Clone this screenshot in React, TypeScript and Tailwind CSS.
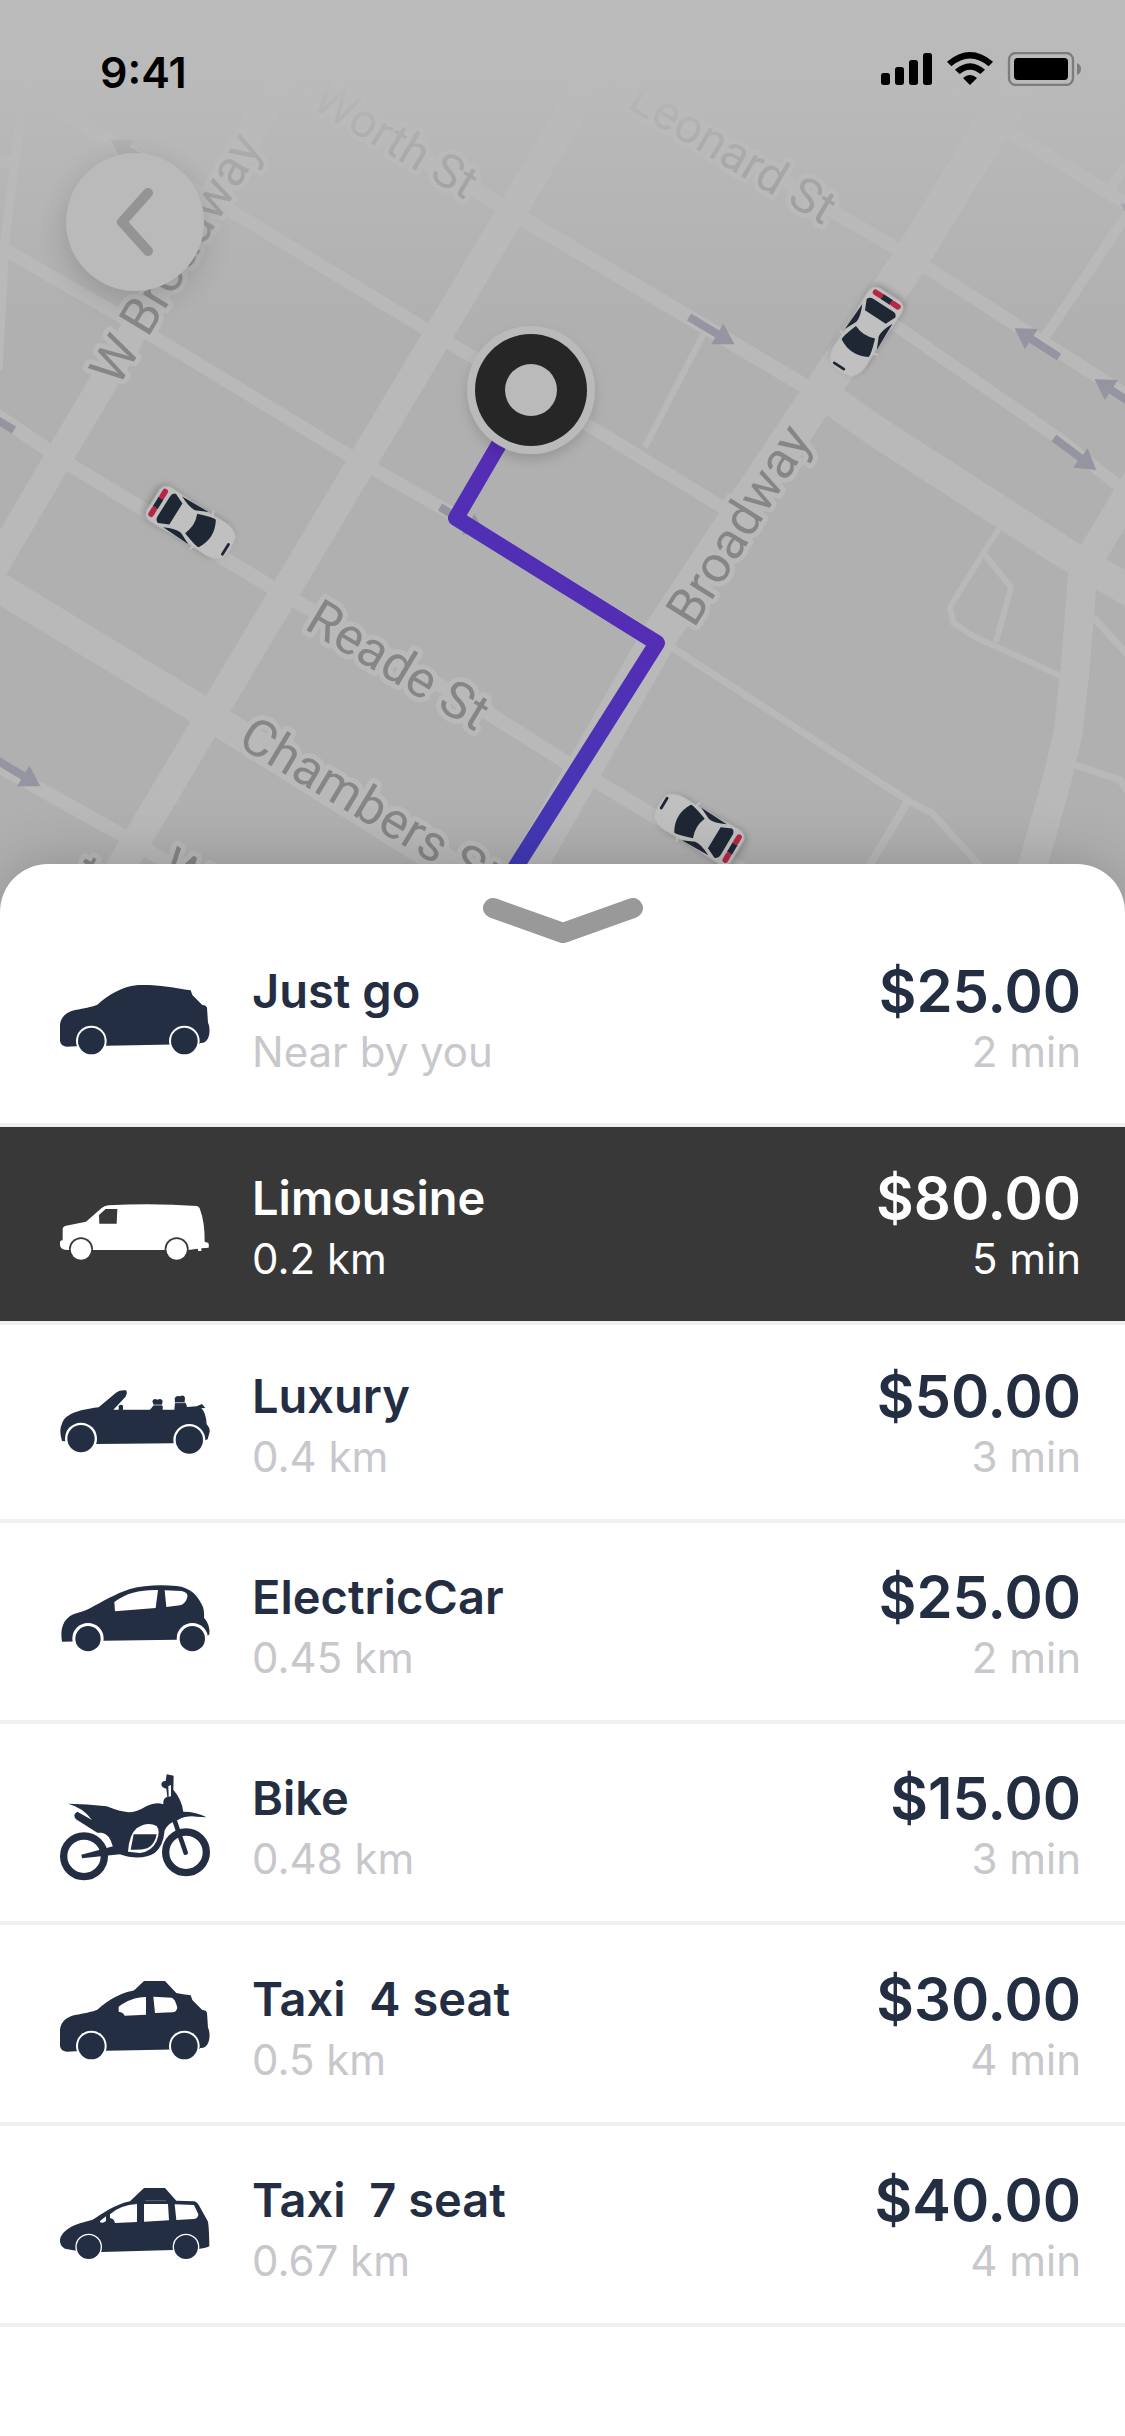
import { useState } from "react";
import type { ReactNode } from "react";
import clsx from "clsx";

/* ---------- Vehicle silhouettes ---------- */

type WheelProps = { cx: number; cy: number; r: number; arch: number; ring: string };

function Wheel({ cx, cy, r, arch, ring }: WheelProps) {
  return (
    <>
      <circle cx={cx} cy={cy} r={arch} className={ring} />
      <circle cx={cx} cy={cy} r={r} />
    </>
  );
}

function Silhouette({ viewBox, children }: { viewBox: string; children: ReactNode }) {
  return (
    <svg viewBox={viewBox} className="h-[116px] w-[150px] shrink-0 overflow-visible fill-current" aria-hidden="true">
      {children}
    </svg>
  );
}

const hatchback =
  "M60 190C64 165 80 153 105 147C135 141 150 139 172 131C205 102 250 74 295 72C350 70 400 79 452 88L457 102L486 131L497 134L501 140L504 185C512 200 510 235 495 243Q488 247 480 246L480 249L200 254L108 256L80 257Q62 255 60 240Z";

function Hatchback() {
  return (
    <Silhouette viewBox="60 9 450 348">
      <path d={hatchback} />
      <Wheel cx={154} cy={240} r={40} arch={46} ring="fill-white" />
      <Wheel cx={433} cy={240} r={40} arch={46} ring="fill-white" />
    </Silhouette>
  );
}

function Van() {
  return (
    <Silhouette viewBox="60 630 450 348">
      <path
        fillRule="evenodd"
        d="M68 805Q68 796 78 794L138 782L185 741Q192 735 205 733Q340 726 470 735Q476 736 479 742Q495 785 494 842L505 846Q508 852 506 860L484 862V870H474V863L445 867H88Q60 868 60 852V842Q62 838 68 838ZM177 762L197 744H232L230 788H178Z"
      />
      <Wheel cx={123} cy={865} r={31} arch={36} ring="fill-[#383838]" />
      <Wheel cx={410} cy={865} r={31} arch={36} ring="fill-[#383838]" />
    </Silhouette>
  );
}

function Convertible() {
  return (
    <Silhouette viewBox="60 1224 450 348">
      <path d="M66 1388C75 1362 105 1348 176 1339L228 1295Q240 1286 258 1288Q264 1294 256 1308L220 1346H236V1334Q243 1328 249 1334V1346H330L341 1333L337 1320Q342 1311 352 1316Q364 1310 368 1320L366 1331Q370 1338 368 1346H403L405 1326L404 1312Q409 1302 420 1306Q431 1300 435 1310L434 1322Q440 1328 441 1338L470 1336L486 1329L496 1341L484 1342Q498 1355 500 1390Q510 1400 509 1412L503 1435L495 1438L400 1447L170 1449L76 1441L66 1440Q56 1405 66 1388Z" />
      <path d="M338 1332H368M405 1325H437" className="stroke-white" strokeWidth={2} />
      <Wheel cx={123} cy={1433} r={41} arch={48} ring="fill-white" />
      <Wheel cx={448} cy={1437} r={41} arch={48} ring="fill-white" />
    </Silhouette>
  );
}

function CompactCar() {
  return (
    <Silhouette viewBox="60 27 450 348">
      <path
        fillRule="evenodd"
        d="M66 242C60 205 68 175 100 160C120 153 135 150 150 142C190 120 225 99 270 84Q330 68 410 75C450 80 470 100 485 130Q494 145 492 170Q511 190 508 220L503 224L410 236L190 239ZM223 123C260 95 300 86 354 87L347 141L225 151ZM374 88L425 90Q445 95 442 108Q438 128 420 133L379 138Z"
      />
      <Wheel cx={144} cy={233} r={38} arch={47} ring="fill-white" />
      <Wheel cx={457} cy={233} r={38} arch={47} ring="fill-white" />
    </Silhouette>
  );
}

function Motorbike() {
  return (
    <Silhouette viewBox="60 630 450 348">
      <g fill="none" stroke="currentColor">
        <circle cx={132} cy={886} r={61} strokeWidth={22} />
        <circle cx={438} cy={874} r={61} strokeWidth={22} />
        <path d="M403 776L437 875" strokeWidth={14} strokeLinecap="round" />
      </g>
      <path d="M124 881L222 855L246 872L240 880L126 892Z" />
      <path
        fillRule="evenodd"
        d="M84 728Q140 729 200 736Q240 752 265 754Q290 754 320 735Q348 721 370 730Q368 712 382 707L379 683Q364 680 364 669Q366 659 377 660L380 640L401 644L400 686Q425 715 430 752Q470 752 500 769L470 767Q440 763 415 776Q385 784 374 808Q370 855 345 875Q320 892 280 889Q250 885 236 878L218 855Q208 818 185 815L172 815L108 775Q96 760 112 752L156 777Q130 740 84 728ZM264 872Q268 820 290 802Q322 780 350 795Q362 810 350 840Q335 872 300 876ZM385 676L393 672V706L386 707Z"
      />
      <path d="M281 820H350Q345 850 322 862Q300 868 272 866Z" />
    </Silhouette>
  );
}

function TaxiSmall() {
  return (
    <Silhouette viewBox="60 93 450 348">
      <path d={hatchback} transform="translate(0 75)" />
      <path d="M274 156L312 120H375L411 158Z" />
      <path
        className="fill-white"
        d="M236 197C260 180 285 168 318 168V221L254 224Q250 213 236 212ZM340 167L395 170Q405 172 412 200Q410 212 398 214L345 216Z"
      />
      <Wheel cx={154} cy={315} r={40} arch={46} ring="fill-white" />
      <Wheel cx={433} cy={315} r={40} arch={46} ring="fill-white" />
    </Silhouette>
  );
}

function TaxiLarge() {
  return (
    <Silhouette viewBox="60 696 450 348">
      <path d="M60 895C65 875 85 858 120 847L158 836C185 820 220 792 270 781L312 741H375L409 779L462 781Q472 783 478 795L503 840Q507 850 508 915Q506 920 475 924L400 927L185 933L108 929L75 923Q58 915 60 895Z" />
      <path
        className="fill-white"
        d="M180 840L198 826V840Q190 848 180 844ZM210 820Q240 792 291 789V843L225 846Q222 832 210 832ZM312 789H384L387 838L312 842ZM404 790L462 792L475 820Q475 832 462 834L409 837Z"
      />
      <path d="M316 779H378" className="stroke-white/40" strokeWidth={2} />
      <Wheel cx={146} cy={918} r={36} arch={40} ring="fill-white" />
      <Wheel cx={438} cy={918} r={36} arch={40} ring="fill-white" />
    </Silhouette>
  );
}

/* ---------- Map ---------- */

const roads: { d: string; w: number }[] = [
  { d: "M300 50L65 447L-15 583", w: 28 },
  { d: "M605 55L110 885", w: 29 },
  { d: "M1060 15L910 260L820 393L663 630L515 890", w: 36 },
  { d: "M29 93L122 147L230 210L424 328L591 427L727 510", w: 13 },
  { d: "M-5 244L115 313L154 337L345 453L449 512L662 643", w: 13 },
  { d: "M662 641L907 800L932 813L982 868", w: 7 },
  { d: "M907 803L868 868", w: 8 },
  { d: "M-5 414L72 466L268 585L488 713L591 778L760 880", w: 14 },
  { d: "M-10 582L197 708L480 885", w: 30 },
  { d: "M-5 764L122 835L220 895", w: 14 },
  { d: "M25 80L5 240L-2 370", w: 9 },
  { d: "M0 162H12", w: 12 },
  { d: "M298 88L470 187L562 242L820 395", w: 15 },
  { d: "M825 395L874 430L1065 553L1140 597", w: 31 },
  { d: "M590 60L835 213L896 248L1029 333L1130 397", w: 13 },
  { d: "M885 318L928 348L1061 440L1120 487", w: 12 },
  { d: "M950 90L1007 130L1130 206", w: 13 },
  { d: "M1130 210L1043 340", w: 10 },
  { d: "M1130 158L1110 190", w: 9 },
  { d: "M704 333L645 447", w: 6 },
  { d: "M1138 478L1083 570L1075 670L1068 733L1057 780L1030 875", w: 29 },
  { d: "M1000 527L984 552L950 607L953 623L975 637L1063 677", w: 6 },
  { d: "M984 554L1011 587L996 642", w: 6 },
  { d: "M1093 617L1128 655", w: 7 },
  { d: "M1072 764L1120 780L1130 795", w: 7 },
];

const arrows = [
  [689, 317, 31],
  [1054, 438, 37],
  [-5, 759, 31],
  [14, 430, 211],
  [1059, 357, 213],
  [1139, 408, 213],
  [156, 167, 211],
  [440, 507, 31],
  [1166, 231, 211],
];

const streets: { name: string; x: number; y: number; angle: number; size: number }[] = [
  { name: "W Broadway", x: 118, y: 388, angle: -59, size: 51 },
  { name: "Worth St", x: 310, y: 107, angle: 31, size: 47 },
  { name: "Leonard St", x: 626, y: 107, angle: 31, size: 48 },
  { name: "Broadway", x: 694, y: 629, angle: -58, size: 51 },
  { name: "Reade St", x: 303, y: 628, angle: 31, size: 51 },
  { name: "Chambers St", x: 236, y: 745, angle: 31, size: 51 },
  { name: "Warren St", x: 157, y: 876, angle: 31, size: 51 },
  { name: "t", x: 109, y: 884, angle: -59, size: 51 },
];

const cabs = [
  [192, 524, 122],
  [865, 333, 213],
  [698, 828, 301],
];

function Cab() {
  return (
    <>
      <path
        d="M-13 -46Q0 -50 13 -46Q20 -39 20 -28L19 -5L21 38Q20 47 13 48H-13Q-20 47 -21 38L-19 -5L-20 -28Q-20 -39 -13 -46Z"
        fill="#c0c0c0"
        filter="url(#cab-shadow)"
      />
      <path d="M-24 -12L-17 -14M24 -12L17 -14" stroke="#c0c0c0" strokeWidth={2} />
      <path
        d="M-17 -19Q0 -29 17 -19Q18 -16 12 1Q0 -4 -12 1Q-18 -16 -17 -19ZM-13 20H13L18 31Q17 35 12 35H-12Q-17 35 -18 31ZM20 -8L14 5Q13 12 19 24ZM-20 -8L-14 5Q-13 12 -19 24Z"
        fill="#1f2735"
      />
      <path d="M-6 42H6" stroke="#1f2735" strokeWidth={6} />
      <path d="M-14 42H-8M8 42H14" stroke="#b82645" strokeWidth={6} strokeLinecap="round" />
      <path d="M-2 -44H10" stroke="#1f2735" strokeWidth={3} strokeLinecap="round" />
    </>
  );
}

function CityMap() {
  return (
    <svg
      viewBox="0 0 1125 920"
      preserveAspectRatio="xMidYMid slice"
      className="absolute inset-0 size-full"
      role="img"
      aria-label="Map with route and nearby cars"
    >
      <defs>
        <linearGradient id="top-haze" x1="0" y1="0" x2="0" y2="1">
          <stop offset="0" stopColor="#bababa" />
          <stop offset="0.24" stopColor="#bababa" />
          <stop offset="1" stopColor="#bababa" stopOpacity="0" />
        </linearGradient>
        <linearGradient id="route" gradientUnits="userSpaceOnUse" x1="430" y1="776" x2="629" y2="576">
          <stop offset="0" stopColor="#4139b4" />
          <stop offset="1" stopColor="#562cb4" />
        </linearGradient>
        <filter id="cab-shadow" x="-50%" y="-50%" width="200%" height="200%">
          <feDropShadow dx="0" dy="3" stdDeviation="4" floodOpacity="0.25" />
        </filter>
        <filter id="pin-shadow" x="-50%" y="-50%" width="200%" height="200%">
          <feDropShadow dx="0" dy="6" stdDeviation="6" floodOpacity="0.14" />
        </filter>
      </defs>
      <rect width="1125" height="920" fill="#b0b0b0" />
      <g fill="none" stroke="#b9b9b9" strokeLinejoin="round">
        {roads.map((road) => (
          <path key={road.d} d={road.d} strokeWidth={road.w} />
        ))}
      </g>
      {arrows.map(([x, y, angle]) => (
        <path
          key={`${x}-${y}`}
          transform={`translate(${x} ${y}) rotate(${angle})`}
          d="M0 -4H33V-12L53 0L33 12V4H0Z"
          fill="#9495a0"
        />
      ))}
      <g
        fill="#868686"
        stroke="#b9b9b9"
        strokeWidth="10"
        strokeLinejoin="round"
        paintOrder="stroke"
        className="font-[Roboto,sans-serif]"
      >
        {streets.map((street) => (
          <text
            key={street.name}
            fontSize={street.size}
            transform={`translate(${street.x} ${street.y}) rotate(${street.angle})`}
          >
            {street.name}
          </text>
        ))}
      </g>
      <rect width="1125" height="330" fill="url(#top-haze)" />
      {cabs.map(([x, y, angle]) => (
        <g key={x} transform={`translate(${x} ${y}) rotate(${angle}) scale(0.95)`}>
          <Cab />
        </g>
      ))}
      <path
        d="M505 434L456 518L657 643L500 892"
        fill="none"
        stroke="url(#route)"
        strokeWidth="16"
        strokeLinejoin="round"
      />
      <circle cx="531" cy="390" r="64" fill="#bababa" filter="url(#pin-shadow)" />
      <circle cx="531" cy="390" r="56" fill="#262626" />
      <circle cx="531" cy="390" r="26" fill="#bababa" />
    </svg>
  );
}

function StatusBar() {
  return (
    <div className="flex items-center justify-between pt-[42px] pr-11 pl-[100px]">
      <time className="text-[43px] leading-[60px] font-semibold text-black">9:41</time>
      <svg viewBox="63 66 600 102" className="mb-[6px] h-[34px] w-[200px]" aria-label="Signal, Wi-Fi and battery" role="img">
        <rect x="63" y="129" width="27" height="36" rx="8" />
        <rect x="105" y="111" width="27" height="54" rx="8" />
        <rect x="147" y="90" width="27" height="75" rx="8" />
        <rect x="189" y="69" width="27" height="96" rx="8" />
        <path d="M261 95Q330 37 399 95L386 109Q330 62 274 109ZM285 119Q330 80 375 119L361 132Q330 106 299 132ZM309 144Q330 126 351 144L330 165Z" />
        <rect x="447" y="69" width="192" height="96" rx="20" fill="none" stroke="#7c7c7c" strokeWidth="7" />
        <rect x="462" y="84" width="162" height="66" rx="11" />
        <path d="M651 99Q663 104 663 117Q663 130 651 135Z" fill="#7c7c7c" />
      </svg>
    </div>
  );
}

/* ---------- Ride list ---------- */

type Ride = {
  name: string;
  note: string;
  price: string;
  eta: string;
  icon: ReactNode;
  pad: string;
};

const rides: Ride[] = [
  { name: "Just go", note: "Near by you", price: "$25.00", eta: "2 min", icon: <Hatchback />, pad: "pt-[17px] pb-10" },
  { name: "Limousine", note: "0.2 km", price: "$80.00", eta: "5 min", icon: <Van />, pad: "pt-[41px] pb-[31px]" },
  { name: "Luxury", note: "0.4 km", price: "$50.00", eta: "3 min", icon: <Convertible />, pad: "pt-[41px] pb-[31px]" },
  { name: "ElectricCar", note: "0.45 km", price: "$25.00", eta: "2 min", icon: <CompactCar />, pad: "pt-11 pb-[31px]" },
  { name: "Bike", note: "0.48 km", price: "$15.00", eta: "3 min", icon: <Motorbike />, pad: "pt-11 pb-[31px]" },
  { name: "Taxi  4 seat", note: "0.5 km", price: "$30.00", eta: "4 min", icon: <TaxiSmall />, pad: "pt-11 pb-[31px]" },
  { name: "Taxi  7 seat", note: "0.67 km", price: "$40.00", eta: "4 min", icon: <TaxiLarge />, pad: "pt-11 pb-[31px]" },
];

function RideRow({ ride, selected, onSelect }: { ride: Ride; selected: boolean; onSelect: () => void }) {
  return (
    <li className="border-b-4 border-[#f0f0f3]">
      <button
        type="button"
        aria-pressed={selected}
        onClick={onSelect}
        className={clsx(
          "flex w-full items-center pr-11 pl-[60px] text-left",
          ride.pad,
          selected ? "bg-[#383838] text-white" : "bg-white text-[#242e42]",
        )}
      >
        {ride.icon}
        <span className="ml-[42px] flex min-w-0 flex-1 flex-col">
          <span className="text-[47px] leading-[60px] font-semibold whitespace-pre">{ride.name}</span>
          <span className={clsx("text-[42px] leading-[62px]", selected ? "text-white" : "text-[#c8c7cc]")}>
            {ride.note}
          </span>
        </span>
        <span className="flex flex-col text-right">
          <span className="text-[58px] leading-[60px] font-semibold">{ride.price}</span>
          <span className={clsx("text-[42px] leading-[62px]", selected ? "text-white" : "text-[#c8c7cc]")}>
            {ride.eta}
          </span>
        </span>
      </button>
    </li>
  );
}

export default function App() {
  const [selected, setSelected] = useState("Limousine");

  return (
    <main className="flex min-h-screen flex-col bg-white font-[Inter,sans-serif]">
      <section className="relative aspect-[1125/920] w-full">
        <CityMap />
        <div className="relative">
          <StatusBar />
          <button
            type="button"
            aria-label="Back"
            className="mt-[51px] ml-[66px] flex size-[138px] items-center justify-center rounded-full bg-[#bababa] shadow-[0_10px_30px_rgba(0,0,0,0.16)]"
          >
            <svg viewBox="0 0 40 70" className="h-[70px] w-10" aria-hidden="true">
              <path
                d="M33 6L7 35L33 64"
                fill="none"
                stroke="#949496"
                strokeWidth="10"
                strokeLinecap="round"
                strokeLinejoin="round"
              />
            </svg>
          </button>
        </div>
      </section>

      <section className="relative -mt-14 flex-1 rounded-t-[48px] bg-white pt-[34px] shadow-[0_0_60px_rgba(0,0,0,0.2)]">
        <button type="button" aria-label="Collapse list" className="mx-auto block">
          <svg viewBox="0 0 160 46" className="h-[46px] w-40" aria-hidden="true">
            <path
              d="M10 10L80 35L150 10"
              fill="none"
              stroke="#999999"
              strokeWidth="20"
              strokeLinecap="round"
              strokeLinejoin="round"
            />
          </svg>
        </button>
        <ul>
          {rides.map((ride) => (
            <RideRow
              key={ride.name}
              ride={ride}
              selected={ride.name === selected}
              onSelect={() => setSelected(ride.name)}
            />
          ))}
        </ul>
      </section>
    </main>
  );
}
